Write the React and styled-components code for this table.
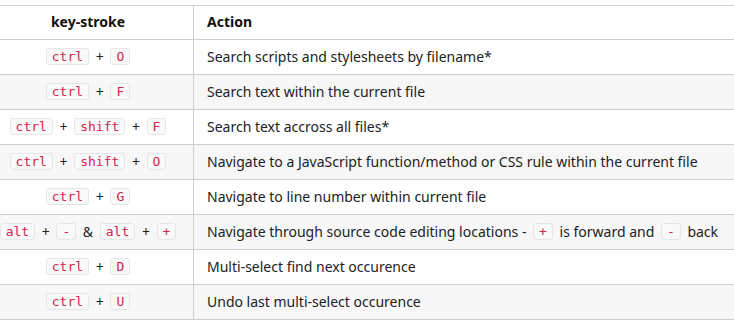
import React from 'react';
import styled, { createGlobalStyle } from 'styled-components';

// ==============================================
// ==============================================

const GlobalStyle = createGlobalStyle`
  html, body {
    margin: 0;
    padding: 0;
    background: #ffffff;
    overflow: hidden;
  }
  body {
    font-family: "Noto Sans", "Open Sans", sans-serif;
    color: #222222;
  }
`;

// ==============================================
// ==============================================

const Page = styled.div`
  padding-top: 5px;
  width: 734px;
  overflow: hidden;
`;

const Table = styled.table`
  border-collapse: collapse;
  margin-left: -17px;
  width: 790px;
  font-size: 14px;
  line-height: 18px;
`;

const HeadCell = styled.th`
  padding: 7px 13px 8px;
  font-weight: 700;
  color: #111111;
  text-align: ${(p) => (p.$center ? 'center' : 'left')};
  border-top: 1px solid #cfcfcf;
  border-bottom: 1px solid #cfcfcf;
  ${(p) => p.$keys && 'width: 184px;'}
  & + & {
    border-left: 1px solid #cfcfcf;
  }
`;

const Row = styled.tr`
  background: ${(p) => (p.$shaded ? '#f7f7f7' : '#ffffff')};
`;

const Cell = styled.td`
  padding: 8px 13px;
  height: 18px;
  white-space: nowrap;
  border-bottom: 1px solid #cfcfcf;
  text-align: ${(p) => (p.$center ? 'center' : 'left')};
  & + & {
    border-left: 1px solid #cfcfcf;
  }
`;

const Key = styled.code`
  display: inline-block;
  font-family: "DejaVu Sans Mono", monospace;
  font-size: 13px;
  line-height: 15px;
  padding: 0 5px;
  margin: 0 3px;
  color: #d3234f;
  background: #f9f9f9;
  border: 1px solid #e6e6e6;
  border-radius: 3px;
  vertical-align: 1px;
`;

// ==============================================
// ==============================================

const shortcuts = [
  { keys: [['ctrl', 'O']], action: 'Search scripts and stylesheets by filename*' },
  { keys: [['ctrl', 'F']], action: 'Search text within the current file' },
  { keys: [['ctrl', 'shift', 'F']], action: 'Search text accross all files*' },
  { keys: [['ctrl', 'shift', 'O']], action: 'Navigate to a JavaScript function/method or CSS rule within the current file' },
  { keys: [['ctrl', 'G']], action: 'Navigate to line number within current file' },
  { keys: [['alt', '-'], ['alt', '+']], action: 'nav' },
  { keys: [['ctrl', 'D']], action: 'Multi-select find next occurence' },
  { keys: [['ctrl', 'U']], action: 'Undo last multi-select occurence' },
];

const Combo = ({ parts }) => (
  <>
    {parts.map((k, i) => (
      <React.Fragment key={i}>
        {i > 0 && ' + '}
        <Key>{k}</Key>
      </React.Fragment>
    ))}
  </>
);

const App = () => {
  return (
    <Page>
      <GlobalStyle />
      <Table>
        <thead>
          <tr>
            <HeadCell $center $keys>key-stroke</HeadCell>
            <HeadCell>Action</HeadCell>
          </tr>
        </thead>
        <tbody>
          {shortcuts.map((s, i) => (
            <Row key={i} $shaded={i % 2 === 1}>
              <Cell $center>
                {s.keys.map((combo, j) => (
                  <React.Fragment key={j}>
                    {j > 0 && ' & '}
                    <Combo parts={combo} />
                  </React.Fragment>
                ))}
              </Cell>
              <Cell>
                {s.action === 'nav' ? (
                  <>
                    Navigate through source code editing locations - <Key>+</Key> is forward and <Key>-</Key> back
                  </>
                ) : (
                  s.action
                )}
              </Cell>
            </Row>
          ))}
        </tbody>
      </Table>
    </Page>
  );
};

export default App;
